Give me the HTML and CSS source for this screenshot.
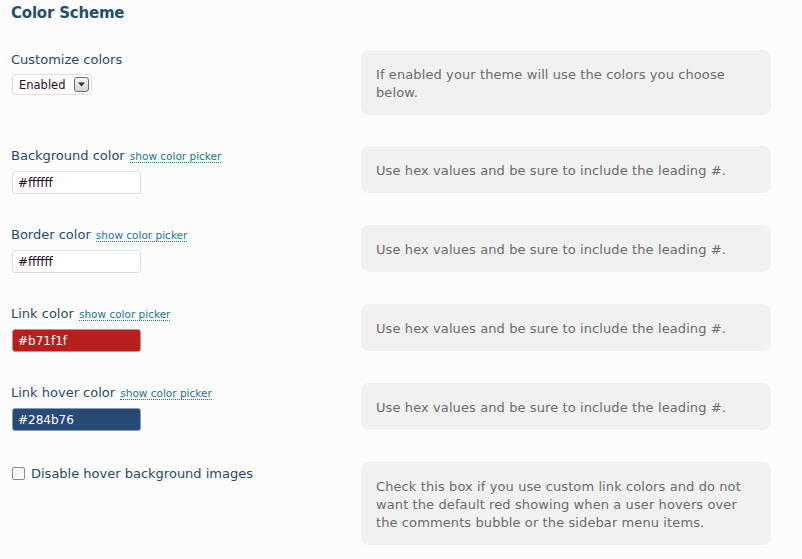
FILE: index.html
```html
<!DOCTYPE html>
<html>
<head>
<meta charset="utf-8">
<title>Color Scheme</title>
<link rel="stylesheet" href="styles.css">
</head>
<body>
<div class="page">
  <h3 class="title">Color Scheme</h3>

  <div class="row row-first">
    <div class="field">
      <div class="label">Customize colors</div>
      <div class="select">
        <span class="select-text">Enabled</span>
        <span class="select-btn">
          <svg width="9" height="5" viewBox="0 0 9 5"><path d="M1 0.5h7L4.5 4.5z" fill="#333"/></svg>
        </span>
      </div>
    </div>
    <div class="help">If enabled your theme will use the colors you choose below.</div>
  </div>

  <div class="row">
    <div class="field">
      <div class="label">Background color <a class="picker">show color picker</a></div>
      <div class="input">#ffffff</div>
    </div>
    <div class="help">Use hex values and be sure to include the leading #.</div>
  </div>

  <div class="row">
    <div class="field">
      <div class="label">Border color <a class="picker">show color picker</a></div>
      <div class="input">#ffffff</div>
    </div>
    <div class="help">Use hex values and be sure to include the leading #.</div>
  </div>

  <div class="row">
    <div class="field">
      <div class="label">Link color <a class="picker">show color picker</a></div>
      <div class="input input-red">#b71f1f</div>
    </div>
    <div class="help">Use hex values and be sure to include the leading #.</div>
  </div>

  <div class="row">
    <div class="field">
      <div class="label">Link hover color <a class="picker">show color picker</a></div>
      <div class="input input-blue">#284b76</div>
    </div>
    <div class="help">Use hex values and be sure to include the leading #.</div>
  </div>

  <div class="row">
    <div class="field">
      <label class="check"><span class="box"></span><span class="label">Disable hover background images</span></label>
    </div>
    <div class="help">Check this box if you use custom link colors and do not want the default red showing when a user hovers over the comments bubble or the sidebar menu items.</div>
  </div>
</div>
</body>
</html>
```
FILE: styles.css
```css
html, body {
  margin: 0;
  padding: 0;
  background: #fcfcfc;
}
body {
  font-family: "DejaVu Sans", Verdana, sans-serif;
  font-size: 13px;
  line-height: 18px;
  color: #333;
}
.page {
  padding: 0 0 0 11px;
}
.title {
  margin: 0;
  padding-top: 4px;
  font-size: 15px;
  line-height: 18px;
  font-weight: bold;
  letter-spacing: -0.2px;
  color: #1f4f6d;
  height: 46px;
}
.row {
  display: grid;
  grid-template-columns: 350px 410px;
  align-items: start;
  margin-bottom: 31px;
}
.label {
  color: #264a6d;
  padding-top: 1px;
  margin-bottom: 6px;
  white-space: nowrap;
}
.row-first .label {
  margin-bottom: 5px;
}
.picker {
  font-size: 10.5px;
  color: #21759b;
  border-bottom: 1px dotted #21759b;
  margin-left: 1px;
  line-height: 12px;
}
.select {
  display: flex;
  align-items: center;
  width: 78px;
  height: 19px;
  margin-left: 1px;
  border: 1px solid #dfdfdf;
  border-radius: 3px;
  background: #fff;
  box-sizing: content-box;
}
.select-text {
  padding-left: 6px;
  font-size: 11.5px;
  color: #2b0a2b;
  flex: 1;
}
.select-btn {
  width: 13px;
  height: 13px;
  margin-right: 2px;
  border: 1px solid #6f6f6f;
  border-radius: 3px;
  background: linear-gradient(#f6f6f6, #d4d4d4);
  display: flex;
  align-items: center;
  justify-content: center;
}
.input {
  width: 122px;
  height: 21px;
  margin-left: 1px;
  padding: 0 0 0 5px;
  border: 1px solid #dfdfdf;
  border-radius: 3px;
  background: #fff;
  color: #2b0a2b;
  line-height: 22px;
  font-size: 12px;
}
.input-red {
  background: #b71f1f;
  color: #fff;
  border-color: #d88a8a;
}
.input-blue {
  background: #284b76;
  color: #fff;
  border-color: #8a9ab0;
}
.check {
  display: flex;
  align-items: center;
  padding-top: 2px;
}
.check .label {
  margin: 0;
}
.box {
  width: 11px;
  height: 11px;
  margin: 0 6px 0 1px;
  border: 1px solid #8a8a8a;
  border-radius: 2px;
  background: linear-gradient(#f2f2f2, #fdfdfd);
}
.help {
  background: #f1f1f1;
  border-radius: 8px;
  padding: 16px 15px 13px 15px;
  color: #6b6b6b;
  letter-spacing: 0.1px;
}
```
